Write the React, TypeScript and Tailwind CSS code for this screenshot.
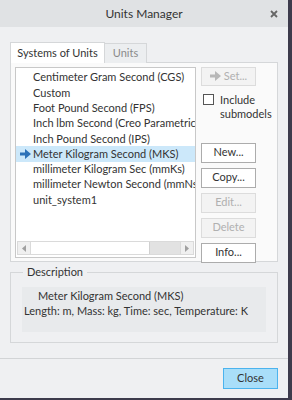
import React from 'react';

const SYSTEMS = [
  'Centimeter Gram Second (CGS)',
  'Custom',
  'Foot Pound Second (FPS)',
  'Inch lbm Second (Creo Parametric Default)',
  'Inch Pound Second (IPS)',
  'Meter Kilogram Second (MKS)',
  'millimeter Kilogram Sec (mmKs)',
  'millimeter Newton Second (mmNs)',
  'unit_system1',
];

const SELECTED = 'Meter Kilogram Second (MKS)';

function Arrow({ color }: { color: string }) {
  return (
    <svg width="11" height="10" viewBox="0 0 11 10">
      <path d="M0 3.5 H5 V0 L11 5 L5 10 V6.5 H0 Z" fill={color} />
    </svg>
  );
}

function SideButton({ label, disabled, icon }: { label: string; disabled?: boolean; icon?: boolean }) {
  return (
    <div
      className={`h-[20px] w-[55px] flex items-center justify-center gap-[3px] border ${
        disabled ? 'border-[#dcdcdc] bg-[#f3f3f3] text-[#b0b0b0]' : 'border-[#acacac] bg-white text-[#333]'
      }`}
    >
      {icon && <Arrow color="#b8b8b8" />}
      <span>{label}</span>
    </div>
  );
}

export default function App() {
  return (
    <div
      className="w-[292px] h-[400px] bg-[#3d3b4c] text-[11px] text-[#333]"
      style={{ fontFamily: '"Segoe UI", Lato, sans-serif' }}
    >
      <div className="w-[288px] h-[398px] bg-[#eff0f2] flex flex-col">
        <div className="h-[27px] bg-[#e0e2e4] flex items-center relative shrink-0">
          <div className="flex-1 text-center text-[12px] text-[#333]">Units Manager</div>
          <svg className="absolute right-[10px] top-[10px]" width="8" height="8" viewBox="0 0 8 8">
            <path d="M1 1 L7 7 M7 1 L1 7" stroke="#666" strokeWidth="1.8" />
          </svg>
        </div>

        <div className="pl-[10px] pr-[10px] pt-[15px]">
          <div className="flex h-[21px]">
            <div className="w-[95px] border border-b-0 border-[#d5d7d9] bg-white flex items-center justify-center text-[#333]">
              Systems of Units
            </div>
            <div className="w-[42px] mt-[1px] border border-l-0 border-b-0 border-[#d5d7d9] bg-[#eceef0] flex items-center justify-center text-[#8a8a8a]">
              Units
            </div>
          </div>
          <div className="h-[200px] -mt-[1px] border border-[#d5d7d9] bg-[#fafafa] flex pt-[4px] pl-[4px] gap-[5px]">
            <div className="w-[181px] h-[191px] border border-[#c8c8c8] bg-white flex flex-col">
              <div className="flex-1 overflow-hidden pt-[2px]">
                {SYSTEMS.map((s) => (
                  <div
                    key={s}
                    className={`h-[15.3px] flex items-center whitespace-nowrap ${s === SELECTED ? 'bg-[#cce8fa]' : ''}`}
                  >
                    <div className="w-[17px] pl-[2px] flex justify-center shrink-0">
                      {s === SELECTED && <Arrow color="#2d72b8" />}
                    </div>
                    <span>{s}</span>
                  </div>
                ))}
              </div>
              <div className="h-[14px] mx-[1px] mb-[2px] flex border border-[#dadada] bg-[#f0f0f0]">
                <div className="w-[13px] flex items-center justify-center border-r border-[#dadada]">
                  <svg width="4" height="7" viewBox="0 0 4 7">
                    <path d="M4 0 L0 3.5 L4 7 Z" fill="#a0a0a0" />
                  </svg>
                </div>
                <div className="w-[119px] bg-white border-r border-[#d0d0d0]" />
                <div className="flex-1 bg-[#e2e2e2]" />
                <div className="w-[13px] flex items-center justify-center border-l border-[#dadada]">
                  <svg width="4" height="7" viewBox="0 0 4 7">
                    <path d="M0 0 L4 3.5 L0 7 Z" fill="#a0a0a0" />
                  </svg>
                </div>
              </div>
            </div>
            <div className="flex flex-col">
              <SideButton label="Set..." disabled icon />
              <div className="flex mt-[7px] pl-[2px] gap-[6px]">
                <div className="w-[11px] h-[11px] mt-[1px] border border-[#555] bg-white shrink-0" />
                <div className="leading-[14px] whitespace-nowrap">
                  Include
                  <br />
                  submodels
                </div>
              </div>
              <div className="flex flex-col gap-[5px] mt-[22px]">
                <SideButton label="New..." />
                <SideButton label="Copy..." />
                <SideButton label="Edit..." disabled />
                <SideButton label="Delete" disabled />
                <SideButton label="Info..." />
              </div>
            </div>
          </div>

          <div className="relative mt-[10px] h-[71px] border border-[#d5d7d9] px-[11px] pt-[14px]">
            <span className="absolute left-[12px] -top-[9px] px-[4px] bg-[#eff0f2]">Description</span>
            <div className="h-[45px] bg-[#e8eaec] px-[2px] pt-[1px] leading-[15px] whitespace-nowrap">
              <div className="pl-[14px]">Meter Kilogram Second (MKS)</div>
              <div>Length: m, Mass: kg, Time: sec, Temperature: K</div>
            </div>
          </div>
        </div>

        <div className="mt-[15px] border-t border-[#d2d4d6]" />
        <div className="flex justify-end pr-[10px] pt-[9px]">
          <div className="w-[55px] h-[21px] border border-[#4bb3ee] bg-[#a9def9] flex items-center justify-center text-[#333]">
            Close
          </div>
        </div>
      </div>
    </div>
  );
}
